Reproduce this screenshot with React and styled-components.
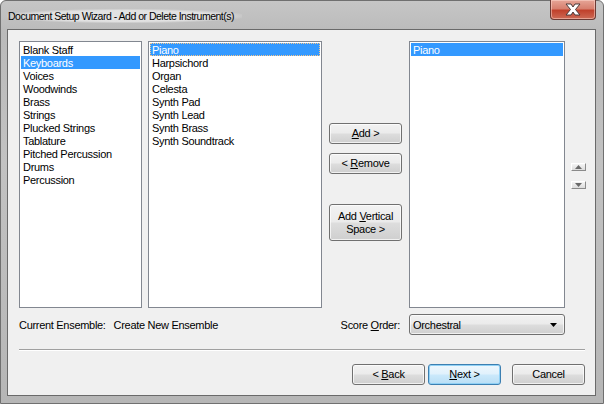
import React from 'react';
import styled, { createGlobalStyle } from 'styled-components';

const GlobalStyle = createGlobalStyle`
   html, body {
      margin: 0;
      padding: 0;
      overflow: hidden;
      background: #ffffff;
   }
   * {
      box-sizing: border-box;
   }
`;

const categories = [
   'Blank Staff',
   'Keyboards',
   'Voices',
   'Woodwinds',
   'Brass',
   'Strings',
   'Plucked Strings',
   'Tablature',
   'Pitched Percussion',
   'Drums',
   'Percussion',
];

const instruments = [
   'Piano',
   'Harpsichord',
   'Organ',
   'Celesta',
   'Synth Pad',
   'Synth Lead',
   'Synth Brass',
   'Synth Soundtrack',
];

const App = () => {
   return (
      <>
         <GlobalStyle />
         <Window>
            <TitleBar>
               <Title>Document Setup Wizard - Add or Delete Instrument(s)</Title>
               <CloseButton>
                  <svg width="20" height="13" viewBox="0 0 20 13">
                     <path
                        d="M3 1h5l2 3 2-3h5l-4.5 5.5L17 12h-5l-2-3-2 3H3l4.5-5.5z"
                        fill="#ffffff"
                        stroke="#4a3a3a"
                        strokeWidth="1"
                        strokeLinejoin="round"
                     />
                  </svg>
               </CloseButton>
            </TitleBar>

            <Client>
               <MainRow>
                  <ListBox $width={123}>
                     {categories.map(name => (
                        <Item key={name} $selected={name === 'Keyboards'}>
                           {name}
                        </Item>
                     ))}
                  </ListBox>

                  <ListBox $width={174}>
                     {instruments.map(name => (
                        <Item key={name} $selected={name === 'Piano'} $focused={name === 'Piano'}>
                           {name}
                        </Item>
                     ))}
                  </ListBox>

                  <ButtonColumn>
                     <Button $height={21}>
                        <span>
                           <u>A</u>dd &gt;
                        </span>
                     </Button>
                     <Button $height={21} $top={9}>
                        <span>
                           &lt; <u>R</u>emove
                        </span>
                     </Button>
                     <Button $height={37} $top={30}>
                        <span>
                           Add <u>V</u>ertical
                           <br />
                           Space &gt;
                        </span>
                     </Button>
                  </ButtonColumn>

                  <ListBox $width={156}>
                     <Item $selected>Piano</Item>
                  </ListBox>

                  <ScrollColumn>
                     <ArrowButton>
                        <svg width="7" height="4" viewBox="0 0 7 4">
                           <path d="M0 4L3.5 0 7 4z" fill="#6a6a6a" />
                        </svg>
                     </ArrowButton>
                     <ArrowButton>
                        <svg width="7" height="4" viewBox="0 0 7 4">
                           <path d="M0 0h7L3.5 4z" fill="#6a6a6a" />
                        </svg>
                     </ArrowButton>
                  </ScrollColumn>
               </MainRow>

               <FooterRow>
                  <Label>Current Ensemble:</Label>
                  <Label $left={8}>Create New Ensemble</Label>
                  <Spacer />
                  <Label>
                     Score <u>O</u>rder:
                  </Label>
                  <Select>
                     <span>Orchestral</span>
                     <svg width="7" height="4" viewBox="0 0 7 4">
                        <path d="M0 0h7L3.5 4z" fill="#000000" />
                     </svg>
                  </Select>
               </FooterRow>

               <Separator />

               <ActionRow>
                  <Button $width={73}>
                     <span>
                        &lt; <u>B</u>ack
                     </span>
                  </Button>
                  <Button $width={73} $primary>
                     <span>
                        <u>N</u>ext &gt;
                     </span>
                  </Button>
                  <Button $width={73} $gap={8}>
                     <span>Cancel</span>
                  </Button>
               </ActionRow>
            </Client>
         </Window>
      </>
   );
};

export default App;

const Window = styled.div`
   width: 604px;
   height: 404px;
   display: flex;
   flex-direction: column;
   padding: 0 7px 7px 6px;
   border: 1px solid #707070;
   border-radius: 6px 6px 0 0;
   background: linear-gradient(180deg, #c6c6c6 0%, #bababa 8%, #c2c2c2 40%, #b6b6b6 100%),
      #c0c0c0;
   font-family: 'Liberation Sans', Arial, sans-serif;
`;

const TitleBar = styled.div`
   height: 28px;
   flex: none;
   display: flex;
   align-items: flex-start;
   justify-content: space-between;
`;

const Title = styled.div`
   margin-top: 8px;
   padding: 0 8px 0 1px;
   font-size: 10.5px;
   letter-spacing: -0.5px;
   color: #000000;
   line-height: 14px;
   background: radial-gradient(ellipse at center, rgba(232, 232, 232, 0.85) 55%, rgba(232, 232, 232, 0) 75%);
`;

const CloseButton = styled.div`
   width: 46px;
   height: 20px;
   margin-top: -1px;
   display: flex;
   align-items: center;
   justify-content: center;
   border: 1px solid #6b3a34;
   border-top: none;
   border-radius: 0 0 4px 4px;
   background: linear-gradient(180deg, #e6a597 0%, #d7806f 45%, #c0412c 55%, #cd6a55 100%);
   box-shadow: inset 0 0 0 1px rgba(255, 220, 210, 0.5);
`;

const Client = styled.div`
   flex: 1;
   display: flex;
   flex-direction: column;
   padding: 11px 10px 10px 11px;
   background: #f0f0f0;
   border: 1px solid #6a6a6a;
`;

const MainRow = styled.div`
   height: 267px;
   display: flex;
   gap: 6px;
`;

const ListBox = styled.div`
   width: ${props => props.$width}px;
   height: 100%;
   padding: 1px;
   background: #ffffff;
   border: 1px solid #828790;
   font-size: 11px;
   letter-spacing: -0.3px;
`;

const Item = styled.div`
   height: 13px;
   line-height: 12px;
   padding-left: 1px;
   white-space: nowrap;
   color: ${props => (props.$selected ? '#ffffff' : '#000000')};
   background: ${props => (props.$selected ? '#3399ff' : 'transparent')};
   border: 1px ${props => (props.$focused ? 'dotted #f7c68a' : 'solid transparent')};
`;

const ButtonColumn = styled.div`
   width: 73px;
   margin: 0 1px;
   padding-top: 82px;
   display: flex;
   flex-direction: column;
`;

const Button = styled.div`
   width: ${props => (props.$width ? `${props.$width}px` : '100%')};
   height: ${props => props.$height || 21}px;
   margin-top: ${props => props.$top || 0}px;
   margin-left: ${props => props.$gap || 0}px;
   flex: none;
   display: flex;
   align-items: center;
   justify-content: center;
   text-align: center;
   font-size: 11px;
   letter-spacing: -0.3px;
   line-height: 13px;
   color: #000000;
   border: 1px solid ${props => (props.$primary ? '#3c7fb1' : '#707070')};
   border-radius: 3px;
   background: ${props =>
      props.$primary
         ? 'linear-gradient(180deg, #eef7fd 0%, #e0f1fc 48%, #cbe9fb 52%, #b9def5 100%)'
         : 'linear-gradient(180deg, #f2f2f2 0%, #ebebeb 48%, #dddddd 52%, #cfcfcf 100%)'};
   box-shadow: inset 0 0 0 1px ${props => (props.$primary ? '#8fd0f5' : 'rgba(255, 255, 255, 0.7)')};

   u {
      text-decoration-thickness: 1px;
      text-underline-offset: 1px;
   }
`;

const ScrollColumn = styled.div`
   width: 14px;
   padding-top: 122px;
   display: flex;
   flex-direction: column;
   gap: 10px;
`;

const ArrowButton = styled.div`
   width: 15px;
   height: 8px;
   display: flex;
   align-items: center;
   justify-content: center;
   border: 1px solid #a0a0a0;
   border-color: #ffffff #8a8a8a #8a8a8a #ffffff;
   background: linear-gradient(180deg, #f4f4f4, #dcdcdc);
`;

const FooterRow = styled.div`
   height: 21px;
   margin-top: 6px;
   display: flex;
   align-items: center;
   padding-right: 20px;
`;

const Label = styled.div`
   margin-left: ${props => props.$left || 0}px;
   font-size: 11px;
   letter-spacing: -0.3px;
   color: #000000;
   white-space: nowrap;
`;

const Spacer = styled.div`
   flex: 1;
`;

const Select = styled.div`
   width: 156px;
   height: 21px;
   margin-left: 9px;
   padding: 0 7px 0 3px;
   display: flex;
   align-items: center;
   justify-content: space-between;
   font-size: 11px;
   letter-spacing: -0.3px;
   border: 1px solid #707070;
   border-radius: 3px;
   background: linear-gradient(180deg, #f2f2f2 0%, #ebebeb 48%, #dddddd 52%, #cfcfcf 100%);
   box-shadow: inset 0 0 0 1px rgba(255, 255, 255, 0.7);
`;

const Separator = styled.div`
   height: 2px;
   margin-top: 14px;
   border-top: 1px solid #a0a0a0;
   border-bottom: 1px solid #ffffff;
`;

const ActionRow = styled.div`
   margin-top: 13px;
   display: flex;
   justify-content: flex-end;
   gap: 3px;
`;
